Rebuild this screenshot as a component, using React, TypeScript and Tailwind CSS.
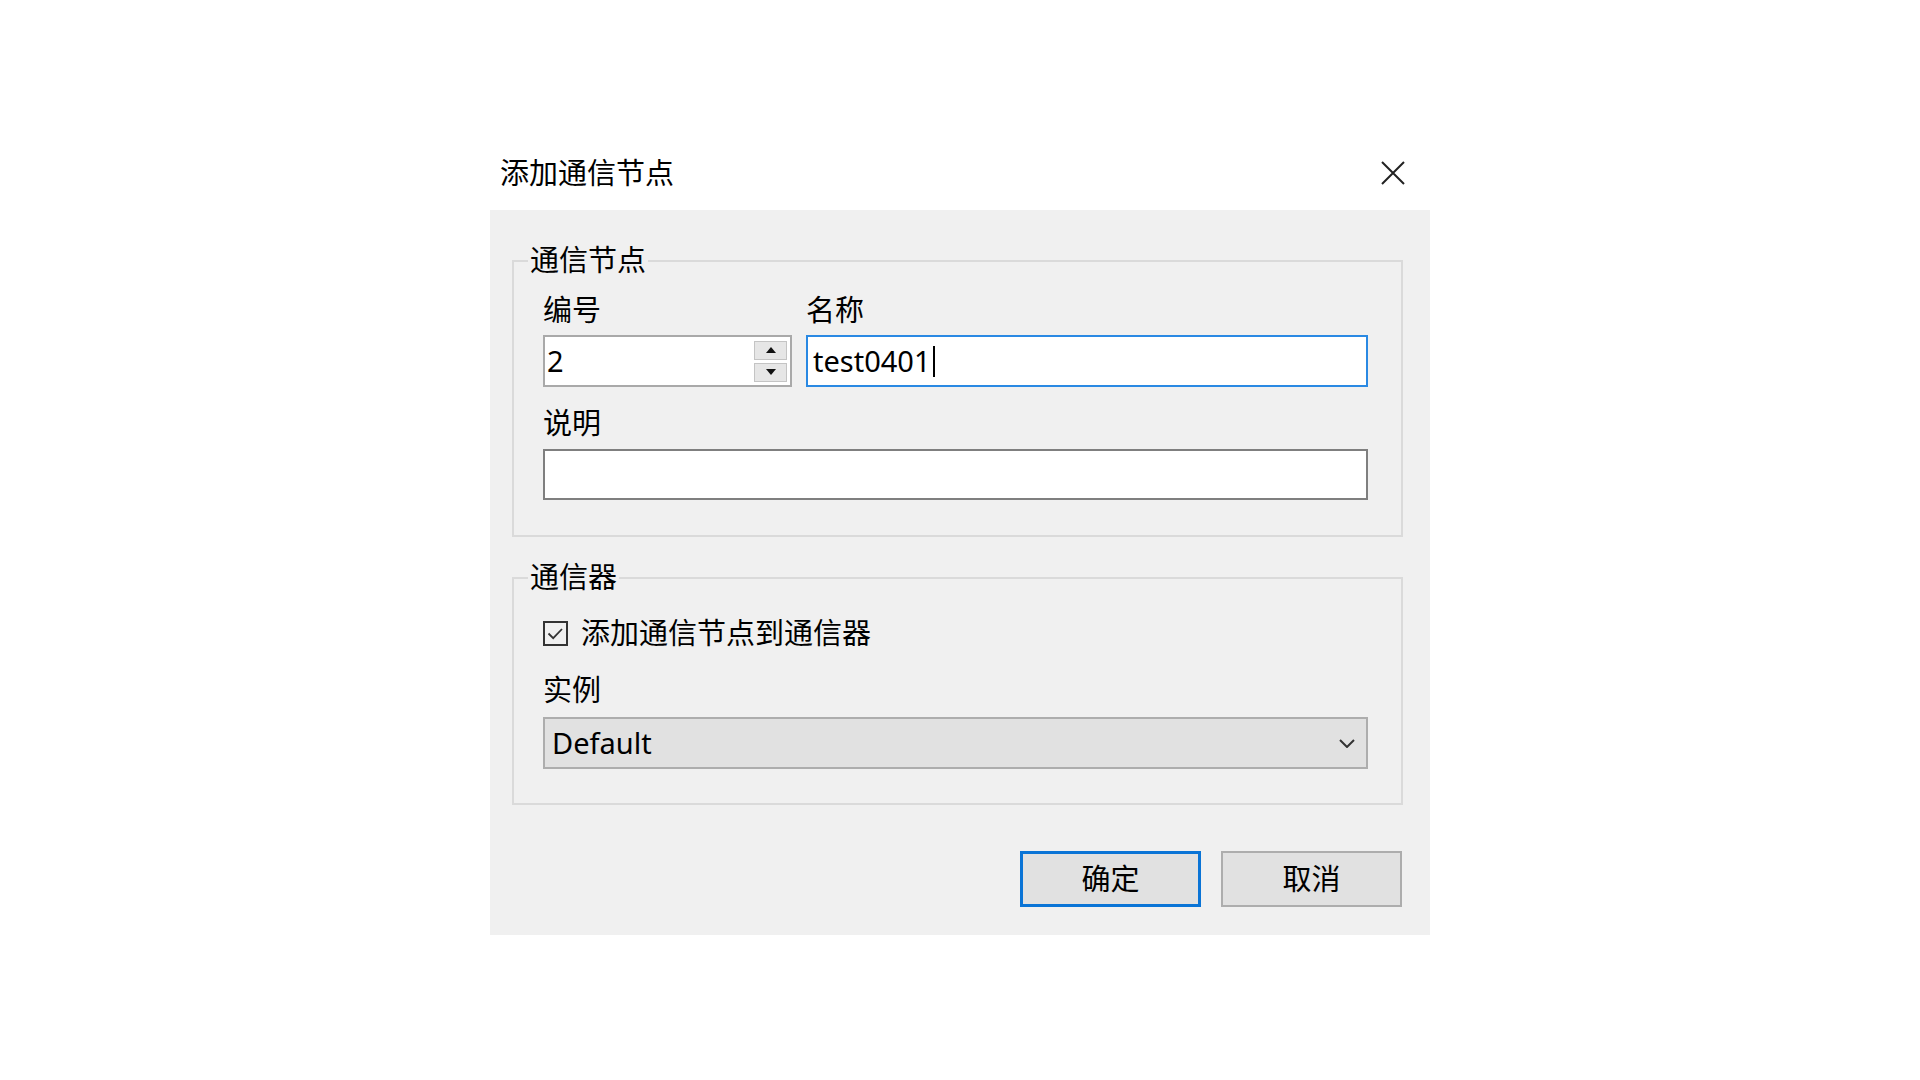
import React from "react";

export default function App() {
  return (
    <div className="min-h-[1080px] w-[1920px] bg-white font-['Noto_Sans','Noto_Sans_CJK_SC',sans-serif] text-black">
      <div className="ml-[490px] w-[940px] pt-[130px]">
        {/* title bar */}
        <div className="flex h-[80px] items-center justify-between pl-[10px] pr-[25px] pt-[6px]">
          <div className="text-[29px] leading-[34px]">添加通信节点</div>
          <svg width="24" height="24" viewBox="0 0 24 24" className="block">
            <path d="M1 1 L23 23 M23 1 L1 23" stroke="#222" strokeWidth="2" fill="none" />
          </svg>
        </div>
        {/* body */}
        <div className="flex flex-col bg-[#f0f0f0] pb-[28px] pl-[22px] pr-[27px] pt-[50px]">
          {/* group 1 */}
          <div className="relative border-2 border-[#dadada] pb-[35px] pl-[29px] pr-[33px] pt-[33px]">
            <div className="absolute left-[14px] top-[-17px] bg-[#f0f0f0] px-[2px] text-[29px] leading-[30px]">通信节点</div>
            <div className="flex gap-[14px]">
              <div className="flex w-[249px] flex-col gap-[10px]">
                <div className="text-[29px] leading-[30px]">编号</div>
                <div className="flex h-[52px] items-center justify-between border-2 border-[#a9a9a9] bg-white pl-[2px] pr-[3px]">
                  <span className="text-[29px] leading-[30px]">2</span>
                  <div className="flex flex-col gap-[3px]">
                    <div className="flex h-[19px] w-[33px] items-center justify-center border border-[#c4c4c4] bg-[#e6e6e6]">
                      <svg width="10" height="6" viewBox="0 0 10 6"><path d="M0 6 L5 0 L10 6 Z" fill="#111" /></svg>
                    </div>
                    <div className="flex h-[19px] w-[33px] items-center justify-center border border-[#c4c4c4] bg-[#e6e6e6]">
                      <svg width="10" height="6" viewBox="0 0 10 6"><path d="M0 0 L10 0 L5 6 Z" fill="#111" /></svg>
                    </div>
                  </div>
                </div>
              </div>
              <div className="flex flex-1 flex-col gap-[10px]">
                <div className="text-[29px] leading-[30px]">名称</div>
                <div className="flex h-[52px] items-center border-2 border-[#2a89e3] bg-white pl-[5px]">
                  <span className="text-[29px] leading-[30px]">test0401</span>
                  <span className="ml-[2px] h-[31px] w-[2px] bg-black" />
                </div>
              </div>
            </div>
            <div className="mt-[21px] text-[29px] leading-[30px]">说明</div>
            <div className="mt-[11px] h-[51px] border-2 border-[#7f7f7f] bg-white" />
          </div>
          {/* group 2 */}
          <div className="relative mt-[40px] border-2 border-[#dadada] pb-[34px] pl-[29px] pr-[33px] pt-[39px]">
            <div className="absolute left-[14px] top-[-17px] bg-[#f0f0f0] px-[2px] text-[29px] leading-[30px]">通信器</div>
            <div className="flex h-[30px] items-center gap-[13px]">
              <div className="flex h-[25px] w-[25px] items-center justify-center border-2 border-[#333]">
                <svg width="19" height="19" viewBox="0 0 19 19">
                  <path d="M2.5 9.5 L7.2 14.2 L16 5" stroke="#333" strokeWidth="1.8" fill="none" />
                </svg>
              </div>
              <span className="text-[29px] leading-[30px]">添加通信节点到通信器</span>
            </div>
            <div className="mt-[27px] text-[29px] leading-[30px]">实例</div>
            <div className="mt-[12px] flex h-[52px] items-center justify-between border-2 border-[#adadad] bg-[#e1e1e1] pl-[7px] pr-[11px]">
              <span className="text-[29px] leading-[30px]">Default</span>
              <svg width="16" height="9" viewBox="0 0 16 9">
                <path d="M1 1 L8 8 L15 1" stroke="#333" strokeWidth="2" fill="none" />
              </svg>
            </div>
          </div>
          {/* buttons */}
          <div className="mt-[46px] flex justify-end gap-[20px] pr-[1px]">
            <button className="flex h-[56px] w-[181px] items-center justify-center border-[3px] border-[#0a74d6] bg-[#e1e1e1] text-[29px] leading-[30px]">确定</button>
            <button className="flex h-[56px] w-[181px] items-center justify-center border-2 border-[#adadad] bg-[#e1e1e1] text-[29px] leading-[30px]">取消</button>
          </div>
        </div>
      </div>
    </div>
  );
}
